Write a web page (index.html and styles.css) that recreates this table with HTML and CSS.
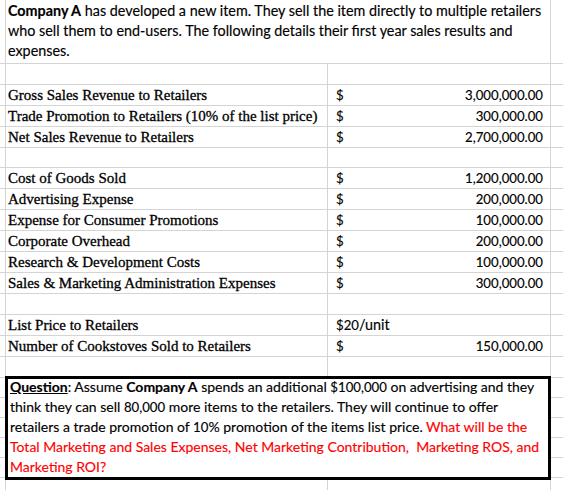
FILE: index.html
```html
<!DOCTYPE html>
<html>
<head>
<meta charset="utf-8">
<link rel="stylesheet" href="styles.css">
</head>
<body>
<div class="sheet">
  <!-- row 1: intro -->
  <div class="cell a"></div>
  <div class="cell bc intro"><b>Company A</b> has developed a new item. They sell the item directly to multiple retailers<br>who sell them to end-users. The following details their first year sales results and<br>expenses.</div>
  <div class="cell d"></div>

  <div class="cell a"></div><div class="cell b"></div><div class="cell c"></div><div class="cell d"></div>

  <div class="cell a"></div><div class="cell b label">Gross Sales Revenue to Retailers</div><div class="cell c money"><span class="num">$</span><span class="num">3,000,000.00</span></div><div class="cell d"></div>
  <div class="cell a"></div><div class="cell b label">Trade Promotion to Retailers (10% of the list price)</div><div class="cell c money"><span class="num">$</span><span class="num">300,000.00</span></div><div class="cell d"></div>
  <div class="cell a"></div><div class="cell b label">Net Sales Revenue to Retailers</div><div class="cell c money"><span class="num">$</span><span class="num">2,700,000.00</span></div><div class="cell d"></div>

  <div class="cell a"></div><div class="cell b"></div><div class="cell c"></div><div class="cell d"></div>

  <div class="cell a"></div><div class="cell b label">Cost of Goods Sold</div><div class="cell c money"><span class="num">$</span><span class="num">1,200,000.00</span></div><div class="cell d"></div>
  <div class="cell a"></div><div class="cell b label">Advertising Expense</div><div class="cell c money"><span class="num">$</span><span class="num">200,000.00</span></div><div class="cell d"></div>
  <div class="cell a"></div><div class="cell b label">Expense for Consumer Promotions</div><div class="cell c money"><span class="num">$</span><span class="num">100,000.00</span></div><div class="cell d"></div>
  <div class="cell a"></div><div class="cell b label">Corporate Overhead</div><div class="cell c money"><span class="num">$</span><span class="num">200,000.00</span></div><div class="cell d"></div>
  <div class="cell a"></div><div class="cell b label">Research &amp; Development Costs</div><div class="cell c money"><span class="num">$</span><span class="num">100,000.00</span></div><div class="cell d"></div>
  <div class="cell a"></div><div class="cell b label">Sales &amp; Marketing Administration Expenses</div><div class="cell c money"><span class="num">$</span><span class="num">300,000.00</span></div><div class="cell d"></div>

  <div class="cell a"></div><div class="cell b"></div><div class="cell c"></div><div class="cell d"></div>

  <div class="cell a"></div><div class="cell b label">List Price to Retailers</div><div class="cell c money"><span><span class="num">$20</span>/unit</span></div><div class="cell d"></div>
  <div class="cell a"></div><div class="cell b label">Number of Cookstoves Sold to Retailers</div><div class="cell c money"><span class="num">$</span><span class="num">150,000.00</span></div><div class="cell d"></div>

  <div class="cell a"></div><div class="cell b"></div><div class="cell c"></div><div class="cell d"></div>

  <!-- question rows -->
  <div class="cell a q1"></div><div class="cell d q1"></div>
  <div class="cell a q2"></div><div class="cell d q2"></div>
  <div class="cell a q3"></div><div class="cell d q3"></div>
  <div class="cell a q4"></div><div class="cell d q4"></div>
  <div class="cell a q5"></div><div class="cell d q5"></div>
  <div class="question"><div class="qtext"><b><u>Question</u></b>: Assume <b>Company A</b> spends an additional <span class="num">$100,000</span> on advertising and they<br>think they can sell <span class="num">80,000</span> more items to the retailers. They will continue to offer<br>retailers a trade promotion of <span class="num">10</span>% promotion of the items list price. <span class="red">What will be the<br>Total Marketing and Sales Expenses, Net Marketing Contribution,&nbsp; Marketing ROS, and<br>Marketing ROI?</span></div></div>

  <div class="cell a last"></div><div class="cell b last"></div><div class="cell c last"></div><div class="cell d last"></div>
</div>
</body>
</html>
```
FILE: styles.css
```css
html, body {
  margin: 0;
  padding: 0;
  background: #ffffff;
  overflow: hidden;
}

.sheet {
  display: grid;
  grid-template-columns: 6px 322px 223px 12px;
  grid-template-rows:
    64px 21px
    21px 21px 21px
    20px
    21px 21px 21px 21px 21px 21px
    21px
    21px 21px
    21px
    20px 20px 20px 20px 20px
    13px;
  width: 563px;
  height: 490px;
  font-family: "Lato", "Carlito", sans-serif;
  font-size: 14.35px;
  color: #000000;
  -webkit-text-stroke: 0.15px #000000;
}

.cell {
  box-sizing: border-box;
  border-right: 1px solid #d4d4d4;
  border-bottom: 1px solid #d4d4d4;
  display: flex;
  align-items: flex-end;
  white-space: nowrap;
  overflow: visible;
}

.a { grid-column: 1; }
.b { grid-column: 2; }
.c { grid-column: 3; }
.d { grid-column: 4; border-right: none; }
.bc { grid-column: 2 / 4; }

.intro {
  display: block;
  padding: 1px 0 0 2px;
  line-height: 20px;
}

.label {
  font-family: "Liberation Serif", "Times New Roman", serif;
  font-size: 15px;
  line-height: 20px;
  padding-left: 2px;
  -webkit-text-stroke: 0.3px #000000;
}

.money {
  justify-content: space-between;
  padding: 0 7px 0 8px;
  line-height: 20px;
}

.num {
  font-size: 13.2px;
}

.q1 { grid-row: 17; }
.q2 { grid-row: 18; }
.q3 { grid-row: 19; }
.q4 { grid-row: 20; }
.q5 { grid-row: 21; }

.question {
  grid-column: 2 / 4;
  grid-row: 17 / 22;
  box-sizing: border-box;
  margin: -2px 0 -2px -1px;
  border: 3px solid #000000;
  background: #ffffff;
  z-index: 1;
  padding: 0 0 0 2px;
  white-space: nowrap;
  font-size: 14px;
}

.qtext {
  line-height: 20px;
  margin-top: -2px;
}

.red {
  color: #ff0000;
  -webkit-text-stroke: 0.15px #ff0000;
}

.last { border-bottom: none; }
```
